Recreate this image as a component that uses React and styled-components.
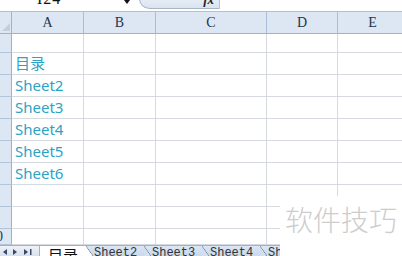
import React from "react";
import styled, { createGlobalStyle, css } from "styled-components";

const Global = createGlobalStyle`
  html, body { margin: 0; padding: 0; background: #fff; overflow: hidden; }
  #root { width: 402px; height: 256px; }
`;

const Sheet = styled.div`
  position: relative;
  width: 402px;
  height: 256px;
  overflow: hidden;
  background: #fff;
  display: flex;
  flex-direction: column;
  font-family: "Liberation Serif", serif;
`;

const FormulaBar = styled.div`
  height: 11px;
  flex: none;
  display: flex;
  align-items: flex-start;
  border-bottom: 1px solid #b4c0cf;
  overflow: hidden;
  background: #fff;
`;

const NameBox = styled.div`
  width: 122px;
  padding-left: 37px;
  box-sizing: border-box;
  margin-top: -9px;
  font-family: "Liberation Serif", serif;
  font-size: 16px;
  line-height: 16px;
  color: #111;
  letter-spacing: 1px;
`;

const DropArrow = styled.div`
  width: 0;
  height: 0;
  margin-left: 2px;
  border-left: 3px solid transparent;
  border-right: 3px solid transparent;
  border-top: 4px solid #111;
`;

const FxPill = styled.div`
  margin-left: 9px;
  margin-top: -12px;
  width: 81px;
  height: 21px;
  box-sizing: border-box;
  border: 1px solid #a7b6c9;
  border-right: 1px solid #b8c4d2;
  border-radius: 11px 0 0 11px;
  background: linear-gradient(#f2f6fb, #dbe4ef);
  display: flex;
  justify-content: flex-end;
  align-items: flex-end;
  padding: 0 5px 2px 0;
`;

const Fx = styled.span`
  font-family: "Liberation Serif", serif;
  font-style: italic;
  font-weight: bold;
  font-size: 13px;
  line-height: 12px;
  color: #222;
`;

const Grid = styled.div`
  display: grid;
  grid-template-columns: 12px 72px 72px 111px 71px 70px;
  grid-template-rows: 22px 19px repeat(8, 22px) 16px;
  flex: none;
`;

const ColHead = styled.div`
  background: #dde7f4;
  border-right: 1px solid #a9bdd5;
  border-bottom: 1px solid #9db3cd;
  box-sizing: border-box;
  display: flex;
  align-items: center;
  justify-content: center;
  font-family: "Liberation Serif", "DejaVu Serif", serif;
  font-size: 14px;
  color: #24344f;
  padding-top: 1px;
`;

const Corner = styled(ColHead)`
  border-right-color: #9db3cd;
  position: relative;
  &::after {
    content: "";
    position: absolute;
    right: 1px;
    bottom: 2px;
    border-left: 8px solid transparent;
    border-bottom: 8px solid #c3cfdd;
  }
`;

const RowHead = styled.div`
  background: #dde7f4;
  border-right: 1px solid #9db3cd;
  border-bottom: 1px solid #b2c4d9;
  box-sizing: border-box;
  overflow: hidden;
  display: flex;
  align-items: flex-end;
  font-family: "Liberation Serif", serif;
  font-size: 14px;
  color: #24344f;
`;

const RowNum = styled.span`
  margin-left: -4px;
  line-height: 14px;
`;

const Cell = styled.div`
  border-right: 1px solid #d6dae0;
  border-bottom: 1px solid #d6dae0;
  box-sizing: border-box;
  display: flex;
  align-items: flex-end;
  padding: 0 0 2px 3px;
  font-family: "Noto Sans", "Noto Sans CJK SC", sans-serif;
  font-size: 15px;
  line-height: 18px;
  color: #2ba3c6;
  white-space: nowrap;
`;

const TabBar = styled.div`
  flex: 1;
  display: flex;
  align-items: stretch;
  background: #fff;
  border-top: 1px solid #9db3cd;
  overflow: hidden;
`;

const NavArea = styled.div`
  width: 40px;
  flex: none;
  display: flex;
  align-items: center;
  gap: 6px;
  padding: 2px 0 0 2px;
  box-sizing: border-box;
  background: linear-gradient(#eef2f8, #d7e1ee);
  border-right: 1px solid #9db3cd;
`;

const Tab = styled.div`
  position: relative;
  flex: none;
  box-sizing: border-box;
  white-space: nowrap;
  ${(p) =>
    p.$active
      ? css`
          width: 46px;
          padding-left: 8px;
          background: #fff;
          font-family: "Noto Sans CJK SC", "Noto Sans", sans-serif;
          font-size: 15px;
          line-height: 18px;
          color: #111;
        `
      : css`
          width: 58px;
          padding-left: 8px;
          background: linear-gradient(#dbe6f4, #c9d8eb);
          font-family: "Liberation Mono", monospace;
          font-size: 12px;
          line-height: 14px;
          color: #333;
          &::before {
            content: "";
            position: absolute;
            left: 0;
            top: 0;
            bottom: 0;
            width: 7px;
            background: linear-gradient(
              to top right,
              ${p.$afterActive ? "#fff" : "#d2dfef"} calc(50% - 0.6px),
              #6f84a3 50%,
              transparent calc(50% + 0.6px)
            );
          }
        `}
`;

const Watermark = styled.div`
  position: absolute;
  left: 280px;
  top: 196px;
  width: 122px;
  height: 60px;
  background: #fff;
  display: flex;
  align-items: flex-start;
  justify-content: flex-end;
  padding: 3px 5px 0 0;
  box-sizing: border-box;
  font-family: "Noto Sans CJK SC", sans-serif;
  font-weight: 300;
  font-size: 28px;
  line-height: 40px;
  color: #cdcdcd;
`;

const cols = ["A", "B", "C", "D", "E"];
const rows = [
  { a: "" },
  { a: "目录" },
  { a: "Sheet2" },
  { a: "Sheet3" },
  { a: "Sheet4" },
  { a: "Sheet5" },
  { a: "Sheet6" },
  { a: "" },
  { a: "" },
  { a: "", num: "0" },
];

const Arrow = ({ dir, bar }) => (
  <svg width={bar ? 8 : 5} height="8" viewBox={bar ? "0 0 8 8" : "0 0 5 8"}>
    {dir === "left" ? (
      <polygon points="5,1 1,4 5,7" fill="#3a4a62" />
    ) : (
      <polygon points="0,1 4,4 0,7" fill="#3a4a62" />
    )}
    {bar && <rect x="6" y="1" width="1.5" height="6" fill="#3a4a62" />}
  </svg>
);

export default function App() {
  const sheets = ["Sheet2", "Sheet3", "Sheet4", "Sheet5"];
  return (
    <>
      <Global />
      <Sheet>
        <FormulaBar>
          <NameBox>I24</NameBox>
          <DropArrow />
          <FxPill>
            <Fx>fx</Fx>
          </FxPill>
        </FormulaBar>
        <Grid>
          <Corner />
          {cols.map((c) => (
            <ColHead key={c}>{c}</ColHead>
          ))}
          {rows.map((r, i) => (
            <React.Fragment key={i}>
              <RowHead>{r.num && <RowNum>{r.num}</RowNum>}</RowHead>
              <Cell>{r.a}</Cell>
              <Cell />
              <Cell />
              <Cell />
              <Cell />
            </React.Fragment>
          ))}
        </Grid>
        <TabBar>
          <NavArea>
            <Arrow dir="left" />
            <Arrow dir="right" />
            <Arrow dir="right" bar />
          </NavArea>
          <Tab $active>目录</Tab>
          {sheets.map((s, i) => (
            <Tab key={s} $afterActive={i === 0}>
              {s}
            </Tab>
          ))}
        </TabBar>
        <Watermark>软件技巧</Watermark>
      </Sheet>
    </>
  );
}
